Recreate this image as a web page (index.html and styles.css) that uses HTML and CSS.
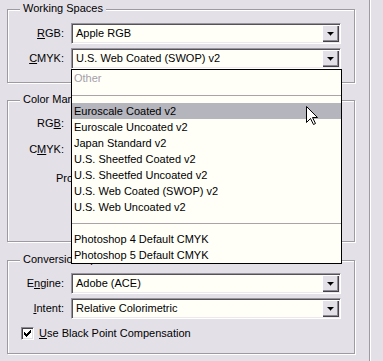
FILE: index.html
```html
<!DOCTYPE html>
<html lang="en">

<head>
    <meta charset="UTF-8">
    <title>Color Settings</title>
    <link rel="stylesheet" href="styles.css">
</head>

<body>
    <div class="dialog">
        <div class="panel">

            <!-- Working Spaces -->
            <div class="group group-spaces">
                <div class="group-title">Working Spaces</div>
                <div class="rows">
                    <div class="row">
                        <span class="label"><u>R</u>GB:</span>
                        <div class="combo">
                            <span class="combo-value">Apple RGB</span>
                            <span class="combo-btn"></span>
                        </div>
                    </div>
                    <div class="row">
                        <span class="label"><u>C</u>MYK:</span>
                        <div class="combo">
                            <span class="combo-value">U.S. Web Coated (SWOP) v2</span>
                            <span class="combo-btn"></span>
                            <ul class="drop-list">
                                <li class="disabled">Other</li>
                                <li class="sep"></li>
                                <li class="hot">Euroscale Coated v2</li>
                                <li>Euroscale Uncoated v2</li>
                                <li>Japan Standard v2</li>
                                <li>U.S. Sheetfed Coated v2</li>
                                <li>U.S. Sheetfed Uncoated v2</li>
                                <li>U.S. Web Coated (SWOP) v2</li>
                                <li>U.S. Web Uncoated v2</li>
                                <li class="sep short"></li>
                                <li>Photoshop 4 Default CMYK</li>
                                <li>Photoshop 5 Default CMYK</li>
                            </ul>
                        </div>
                    </div>
                </div>
            </div>

            <!-- Color Management Policies (mostly under the open list) -->
            <div class="group group-policies">
                <div class="group-title">Color Management Policies</div>
                <div class="rows">
                    <div class="row">
                        <span class="label">RG<u>B</u>:</span>
                        <div class="combo">
                            <span class="combo-value"></span>
                            <span class="combo-btn"></span>
                        </div>
                    </div>
                    <div class="row">
                        <span class="label">C<u>M</u>YK:</span>
                        <div class="combo">
                            <span class="combo-value"></span>
                            <span class="combo-btn"></span>
                        </div>
                    </div>
                    <div class="row row-policy">
                        <span class="policy-label">Profile Mismatches:</span>
                    </div>
                </div>
            </div>

            <!-- Conversion Options -->
            <div class="group group-convert">
                <div class="group-title">Conversion Options</div>
                <div class="rows">
                    <div class="row">
                        <span class="label">E<u>n</u>gine:</span>
                        <div class="combo">
                            <span class="combo-value">Adobe (ACE)</span>
                            <span class="combo-btn"></span>
                        </div>
                    </div>
                    <div class="row">
                        <span class="label"><u>I</u>ntent:</span>
                        <div class="combo">
                            <span class="combo-value">Relative Colorimetric</span>
                            <span class="combo-btn"></span>
                        </div>
                    </div>
                </div>
                <div class="check-row">
                    <span class="checkbox">
                        <svg width="7" height="7" viewBox="0 0 7 7" shape-rendering="crispEdges">
                            <rect x="0" y="2" width="1" height="3" />
                            <rect x="1" y="3" width="1" height="3" />
                            <rect x="2" y="4" width="1" height="3" />
                            <rect x="3" y="3" width="1" height="3" />
                            <rect x="4" y="2" width="1" height="3" />
                            <rect x="5" y="1" width="1" height="3" />
                            <rect x="6" y="0" width="1" height="3" />
                        </svg>
                    </span>
                    <span class="check-label"><u>U</u>se Black Point Compensation</span>
                </div>
            </div>

        </div>
        <div class="vsep"></div>
        <div class="side"></div>

        <!-- mouse pointer over the open list -->
        <svg class="cursor" width="12" height="20" viewBox="0 0 12 20">
            <path d="M0.5 0.5 V16.5 L4.5 12.5 L7.5 18.5 L9.5 17.5 L6.5 11.5 H11.5 Z" fill="#fff" stroke="#000" />
        </svg>
    </div>
</body>

</html>
```

FILE: styles.css
```css
* {
    box-sizing: border-box;
}

html,
body {
    margin: 0;
    height: 100%;
}

body {
    background: #e4e0e8;
    font-family: "Liberation Sans", Arial, sans-serif;
    font-size: 11px;
    line-height: 14px;
    color: #000;
    overflow: hidden;
}

.dialog {
    position: relative;
    display: flex;
    height: 361px;
}

.panel {
    width: 369px;
    padding: 9px 0 0 7px;
}

.vsep {
    width: 2px;
    border-left: 1px solid #9e9aa2;
    border-right: 1px solid #fff;
}

.side {
    flex: 1;
}

/* etched group box */
.group {
    width: 348px;
    border: 1px solid #9e9aa2;
    box-shadow: inset 1px 1px 0 #fff, 1px 1px 0 #fff;
}

.group-title {
    width: max-content;
    margin: -9px 0 0 12px;
    padding: 0 3px;
    background: #e4e0e8;
    line-height: 14px;
    white-space: nowrap;
}

.rows {
    display: flex;
    flex-direction: column;
}

.group-spaces .rows {
    margin-top: 8px;
    padding-bottom: 13px;
    gap: 4px;
}

.group-policies {
    margin-top: 17px;
}

.group-policies .rows {
    margin-top: 7px;
    padding-bottom: 52px;
    gap: 5px;
}

.group-policies .row-policy {
    margin-top: 3px;
}

.group-convert {
    margin-top: 18px;
}

.group-convert .rows {
    margin-top: 7px;
    gap: 4px;
}

.row {
    display: flex;
    align-items: center;
    height: 21px;
}

.label {
    width: 56px;
    margin-right: 7px;
    text-align: right;
    line-height: 21px;
    white-space: nowrap;
}

.row-policy {
    padding-left: 48px;
}

.policy-label {
    line-height: 21px;
    white-space: nowrap;
}

/* combo box */
.combo {
    position: relative;
    display: flex;
    width: 270px;
    height: 21px;
    background: #fffff8;
    border: 1px solid;
    border-color: #9a96a0 #fff #fff #9a96a0;
    box-shadow: inset 1px 1px 0 #56525a, inset -1px -1px 0 #ece8ee;
}

.combo-value {
    flex: 1;
    padding-left: 4px;
    line-height: 19px;
    white-space: nowrap;
    overflow: hidden;
}

.combo-btn {
    display: flex;
    align-items: center;
    justify-content: center;
    width: 17px;
    height: 17px;
    margin: 1px;
    background: #e4e0e8;
    box-shadow: inset 1px 1px 0 #fff, inset -1px -1px 0 #45414a, inset -2px -2px 0 #8e8a92;
}

.combo-btn::before {
    content: "";
    width: 7px;
    height: 4px;
    background: #000;
    clip-path: polygon(0 0, 7px 0, 7px 1px, 6px 1px, 6px 2px, 5px 2px, 5px 3px, 4px 3px, 4px 4px,
            3px 4px, 3px 3px, 2px 3px, 2px 2px, 1px 2px, 1px 1px, 0 1px);
}

/* open drop-down list */
.drop-list {
    position: absolute;
    z-index: 10;
    top: calc(100% + 1px);
    left: -1px;
    width: 271px;
    height: 195px;
    margin: 0;
    padding: 0;
    list-style: none;
    background: #fffff8;
    border: 1px solid #000;
}

.drop-list li {
    height: 16px;
    padding-left: 2px;
    line-height: 16px;
    white-space: nowrap;
}

.drop-list li.disabled {
    color: #a4a0a8;
}

.drop-list li.hot {
    background: #b5b5bd;
}

.drop-list li.sep {
    height: 17px;
    padding: 9px 0 0;
}

.drop-list li.sep.short {
    height: 16px;
    padding-top: 8px;
}

.drop-list li.sep::before {
    content: "";
    display: block;
    height: 1px;
    background: #a8a4aa;
}

/* check box */
.check-row {
    display: flex;
    align-items: center;
    height: 15px;
    margin: 7px 0 12px 13px;
}

.checkbox {
    display: flex;
    align-items: center;
    justify-content: center;
    width: 13px;
    height: 13px;
    background: #fff;
    border: 1px solid;
    border-color: #8e8a92 #fff #fff #8e8a92;
    box-shadow: inset 1px 1px 0 #45414a, inset -1px -1px 0 #e4e0e8;
}

.check-label {
    margin-left: 5px;
    line-height: 15px;
    white-space: nowrap;
}

.cursor {
    position: absolute;
    left: 306px;
    top: 106px;
    z-index: 20;
}
```
